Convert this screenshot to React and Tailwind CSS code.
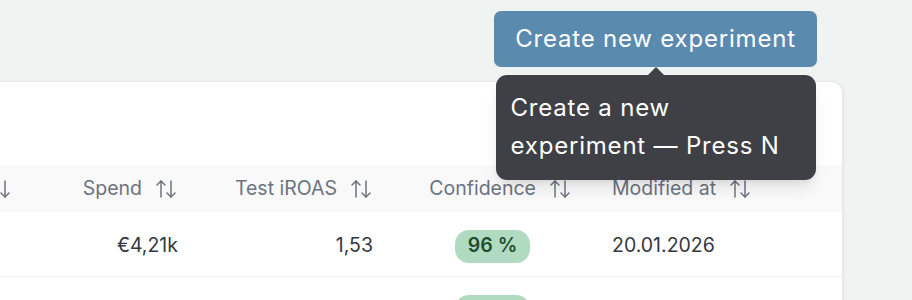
import { ArrowUpDown } from 'lucide-react';

function SortHeader({ label, align = 'end' }) {
  return (
    <div
      className={`flex items-center px-5 ${align === 'end' ? 'justify-end' : 'justify-start'}`}
    >
      {label && <span>{label}</span>}
      <ArrowUpDown size={24} strokeWidth={1.5} className="ml-[12px] shrink-0 text-[#6b7280]" />
    </div>
  );
}

function App() {
  const rows = [
    { spend: '€4,21k', iroas: '1,53', confidence: '96 %', modified: '20.01.2026' },
    { spend: '€3,80k', iroas: '1,21', confidence: '94 %', modified: '18.01.2026' },
  ];

  return (
    <div className="w-[912px] h-[300px] overflow-hidden bg-[#eff3f2] [font-family:Inter,sans-serif]">
      {/* toolbar */}
      <div className="flex justify-end pr-[95px] pt-[11px]">
        <div className="relative">
          <button className="h-[56px] w-[323px] rounded-[7px] bg-[#5b8aaf] text-[24px] tracking-[0.8px] text-white">
            Create new experiment
          </button>
          <div className="absolute left-1/2 top-[56px] z-10 -translate-x-1/2">
            <div className="mx-auto h-0 w-0 border-x-[8px] border-b-[8px] border-x-transparent border-b-[#3f4046]" />
            <div className="w-[320px] rounded-[11px] bg-[#3f4046] px-[15px] pt-[14px] pb-[15px] text-[24px] leading-[38px] tracking-[0.8px] text-white shadow-lg">
              Create a new
              <br />
              experiment — Press N
            </div>
          </div>
        </div>
      </div>

      {/* card */}
      <div className="ml-[-60px] mr-[69px] mt-[14px] rounded-[12px] border border-[#e6e9e8] bg-white shadow-sm">
        <div className="h-[83px]" />
        <div className="text-[19.5px]">
          <div className="grid h-[47px] grid-cols-[91px_166px_195px_199px_199px] items-center bg-[#f9f9f9] text-[#6b7280]">
            <SortHeader label="" />
            <SortHeader label="Spend" />
            <SortHeader label="Test iROAS" />
            <SortHeader label="Confidence" />
            <SortHeader label="Modified at" align="start" />
          </div>
          {rows.map((r, i) => (
            <div
              key={i}
              className="grid h-[65px] grid-cols-[91px_166px_195px_199px_199px] items-center border-b border-[#eeeeee] pt-[4px] text-[#333840]"
            >
              <div />
              <div className="px-5 text-right">{r.spend}</div>
              <div className="px-5 text-right">{r.iroas}</div>
              <div className="flex justify-center">
                <span className="flex h-[33px] w-[75px] items-center justify-center rounded-[14px] bg-[#b1dbc0] font-semibold text-[#1f4d2f]">
                  {r.confidence}
                </span>
              </div>
              <div className="px-5">{r.modified}</div>
            </div>
          ))}
        </div>
      </div>
    </div>
  );
}

export default App;
